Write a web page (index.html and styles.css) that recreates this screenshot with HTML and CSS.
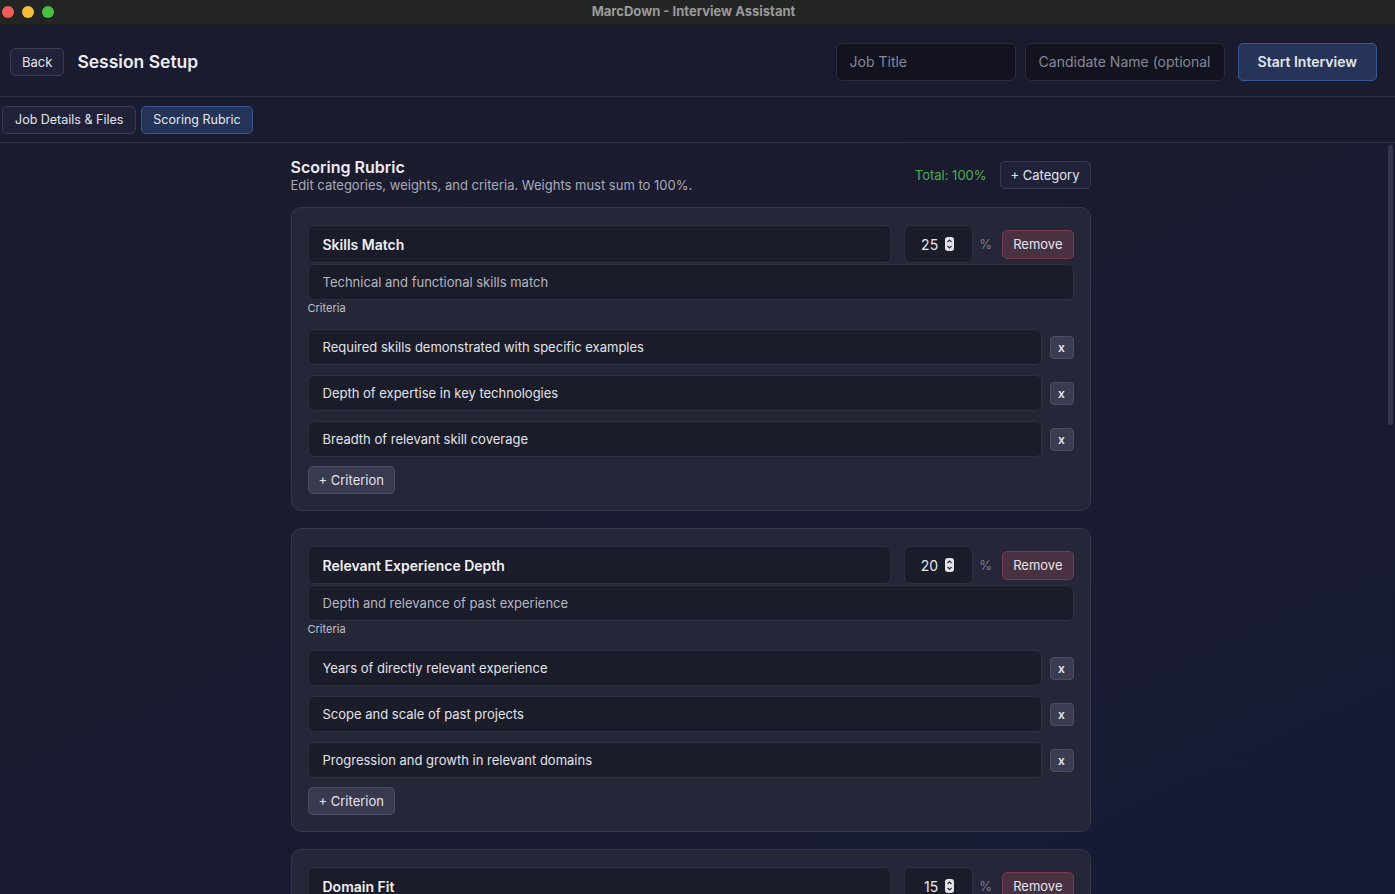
FILE: index.html
```html
<!DOCTYPE html>
<html lang="en">
<head>
    <meta charset="UTF-8">
    <meta name="viewport" content="width=device-width, initial-scale=1.0">
    <title>MarcDown - Interview Assistant</title>
    <link rel="stylesheet" href="styles.css">
</head>
<body>
    <div class="titlebar">
        <div class="lights">
            <span class="light red"></span>
            <span class="light yellow"></span>
            <span class="light green"></span>
        </div>
        <div class="window-title">MarcDown - Interview Assistant</div>
    </div>

    <header class="topbar">
        <div class="topbar-left">
            <button class="btn">Back</button>
            <h1>Session Setup</h1>
        </div>
        <div class="topbar-right">
            <input type="text" class="top-input job" placeholder="Job Title">
            <input type="text" class="top-input candidate" placeholder="Candidate Name (optional)">
            <button class="btn primary">Start Interview</button>
        </div>
    </header>

    <nav class="tabs">
        <button class="btn tab">Job Details &amp; Files</button>
        <button class="btn tab active">Scoring Rubric</button>
    </nav>

    <main class="content">
        <div class="rubric">
            <div class="rubric-head">
                <div>
                    <h2>Scoring Rubric</h2>
                    <p class="sub">Edit categories, weights, and criteria. Weights must sum to 100%.</p>
                </div>
                <div class="rubric-actions">
                    <span class="total">Total: 100%</span>
                    <button class="btn">+ Category</button>
                </div>
            </div>

            <div id="categories"></div>
        </div>
    </main>
    <div class="scroll-thumb"></div>

    <script>
        const categories = [
            { name: 'Skills Match', weight: 25, desc: 'Technical and functional skills match', criteria: [
                'Required skills demonstrated with specific examples',
                'Depth of expertise in key technologies',
                'Breadth of relevant skill coverage'
            ]},
            { name: 'Relevant Experience Depth', weight: 20, desc: 'Depth and relevance of past experience', criteria: [
                'Years of directly relevant experience',
                'Scope and scale of past projects',
                'Progression and growth in relevant domains'
            ]},
            { name: 'Domain Fit', weight: 15, desc: 'Familiarity with the industry and problem space', criteria: [
                'Understanding of the business domain',
                'Awareness of industry trends and constraints',
                'Ability to apply domain knowledge to the role'
            ]},
            { name: 'Problem Solving', weight: 15, desc: 'Approach to ambiguous and complex problems', criteria: [
                'Structured reasoning through unfamiliar problems',
                'Trade-off analysis and decision making',
                'Learning from past mistakes'
            ]},
            { name: 'Communication', weight: 15, desc: 'Clarity and effectiveness of communication', criteria: [
                'Clear and concise explanations',
                'Active listening and follow-up questions',
                'Adapting message to the audience'
            ]},
            { name: 'Culture &amp; Collaboration', weight: 10, desc: 'Teamwork and alignment with team values', criteria: [
                'Examples of effective collaboration',
                'Handling disagreement constructively',
                'Ownership and accountability'
            ]}
        ];

        const stepper = '<svg class="stepper" width="9" height="14" viewBox="0 0 9 14">' +
            '<rect x="0" y="0" width="9" height="14" rx="3" fill="#e4e4e8"/>' +
            '<path d="M2.5 5 L4.5 3 L6.5 5" fill="none" stroke="#2a2a33" stroke-width="1.2"/>' +
            '<path d="M2.5 9 L4.5 11 L6.5 9" fill="none" stroke="#2a2a33" stroke-width="1.2"/>' +
            '</svg>';

        const list = document.getElementById('categories');
        categories.forEach(function(cat) {
            const card = document.createElement('section');
            card.className = 'card';
            let rows = '';
            cat.criteria.forEach(function(c) {
                rows += `
                    <div class="crit-row">
                        <input type="text" class="field crit" value="${c}">
                        <button class="btn small">x</button>
                    </div>`;
            });
            card.innerHTML = `
                <div class="card-top">
                    <input type="text" class="field name" value="${cat.name}">
                    <div class="weight-group">
                        <div class="field weight">
                            <input type="text" value="${cat.weight}">
                            ${stepper}
                        </div>
                        <span class="pct">%</span>
                    </div>
                    <button class="btn danger">Remove</button>
                </div>
                <input type="text" class="field desc" value="${cat.desc}">
                <div class="crit-label">Criteria</div>
                <div class="crit-list">${rows}</div>
                <button class="btn add">+ Criterion</button>
            `;
            list.appendChild(card);
        });
    </script>
</body>
</html>
```

FILE: styles.css
```css
* {
    box-sizing: border-box;
}
html, body {
    height: 100%;
}
body {
    margin: 0;
    font-family: Inter, "Noto Sans", sans-serif;
    color: #e6e7ee;
    background: linear-gradient(155deg, #1c1c2e 0%, #1a1b30 55%, #161a36 100%);
    display: flex;
    flex-direction: column;
    overflow: hidden;
}
button, input {
    font-family: inherit;
}

/* window chrome */
.titlebar {
    height: 25px;
    flex: none;
    background: #232524;
    display: flex;
    align-items: center;
    justify-content: center;
    position: relative;
}
.lights {
    position: absolute;
    left: 2px;
    top: 6px;
    display: flex;
    gap: 8px;
}
.light {
    width: 12px;
    height: 12px;
    border-radius: 50%;
}
.red { background: #ed5f57; }
.yellow { background: #f4bd3a; }
.green { background: #4bc23f; }
.window-title {
    font-size: 13px;
    font-weight: 700;
    color: #999a9a;
    margin-top: -3px;
    margin-left: -8px;
}

/* buttons */
.btn {
    background: #20223a;
    border: 1px solid #393b51;
    color: #e4e5ec;
    border-radius: 5px;
    font-size: 13px;
    height: 28px;
    padding: 0 12px;
    cursor: pointer;
}
.btn.primary {
    background: #253458;
    border-color: #3a5594;
    font-weight: 600;
    font-size: 14px;
    height: 38px;
    padding: 0 19px;
}
.btn.danger {
    background: #4a3141;
    border-color: #7a3b4b;
    height: 29px;
    padding: 0 10px;
}
.btn.small {
    background: #3a3c51;
    border-color: #4b4d63;
    width: 24px;
    height: 23px;
    padding: 0;
    font-size: 12px;
    font-weight: 600;
    border-radius: 4px;
}
.btn.add {
    background: #393a50;
    border-color: #4b4d63;
    padding: 0 10px;
    margin-top: 9px;
}

/* header */
.topbar {
    height: 72px;
    flex: none;
    display: flex;
    align-items: center;
    justify-content: space-between;
    padding: 2px 18px 0 10px;
    background: #1a1b2e;
    border-bottom: 1px solid #2f3145;
}
.topbar-left {
    display: flex;
    align-items: center;
    gap: 13px;
}
.topbar-left .btn {
    padding: 0 11px;
}
h1 {
    margin: 0;
    font-size: 17.5px;
    font-weight: 600;
    color: #ececf2;
}
.topbar-right {
    display: flex;
    align-items: center;
    gap: 9px;
}
.top-input {
    height: 38px;
    background: #12131f;
    border: 1px solid #2a2c3e;
    border-radius: 6px;
    padding: 0 13px;
    font-size: 14px;
    color: #e4e5ec;
}
.top-input::placeholder {
    color: #868898;
}
.top-input.job { width: 180px; }
.top-input.candidate { width: 200px; margin-right: 4px; }

/* tabs */
.tabs {
    height: 46px;
    flex: none;
    display: flex;
    align-items: center;
    gap: 5px;
    padding: 0 2px;
    background: #1a1b2e;
    border-bottom: 1px solid #2f3145;
}
.btn.tab {
    font-size: 12.5px;
    padding: 0 12px;
}
.btn.tab.active {
    background: #243358;
    border-color: #3a5490;
    padding: 0 11px;
}

/* main area */
.content {
    flex: 1;
    overflow-y: auto;
    padding-right: 14px;
}
.content::-webkit-scrollbar {
    width: 0;
}
.scroll-thumb {
    position: fixed;
    right: 2px;
    top: 145px;
    width: 5px;
    height: 280px;
    border-radius: 3px;
    background: #34364c;
}
.rubric {
    width: 800px;
    margin: 0 auto;
    padding: 14px 0 30px;
}
.rubric-head {
    display: flex;
    align-items: center;
    justify-content: space-between;
    margin-bottom: 14px;
}
h2 {
    margin: 0;
    font-size: 16px;
    font-weight: 600;
    line-height: 20px;
    color: #ececf2;
}
.sub {
    margin: 0;
    font-size: 13px;
    line-height: 16px;
    color: #a9abb8;
}
.rubric-actions {
    display: flex;
    align-items: center;
    gap: 13px;
}
.total {
    color: #4caf50;
    font-size: 13px;
}
.rubric-actions .btn {
    padding: 0 10px;
}

/* category cards */
.card {
    background: #252739;
    border: 1px solid #35374c;
    border-radius: 10px;
    padding: 17px 16px 16px;
    margin-bottom: 17px;
    display: flex;
    flex-direction: column;
    align-items: flex-start;
}
.field {
    background: #1b1c29;
    border: 1px solid #2e3042;
    border-radius: 6px;
    color: #e2e3ea;
    font-size: 13px;
    height: 36px;
    padding: 0 14px;
}
.card-top {
    display: flex;
    align-items: center;
    width: 100%;
    gap: 13px;
}
.field.name {
    flex: 1;
    height: 38px;
    font-size: 14px;
    font-weight: 600;
    color: #efeff4;
}
.weight-group {
    display: flex;
    align-items: center;
    gap: 6px;
}
.field.weight {
    width: 69px;
    height: 38px;
    display: flex;
    align-items: center;
    padding: 0 18px 0 0;
    gap: 7px;
}
.field.weight input {
    width: 100%;
    background: transparent;
    border: none;
    color: #e6e7ee;
    font-size: 14px;
    text-align: right;
    padding: 0;
}
.stepper {
    flex: none;
}
.pct {
    color: #7a7c8c;
    font-size: 13px;
    width: 10px;
}
.field.desc {
    width: 100%;
    margin-top: 1px;
    color: #b5b7c2;
}
.crit-label {
    font-size: 11px;
    line-height: 13px;
    color: #c0c2cc;
    margin: 2px 0 14px;
}
.crit-list {
    width: 100%;
    display: flex;
    flex-direction: column;
    gap: 10px;
}
.crit-row {
    display: flex;
    align-items: center;
    gap: 8px;
}
.field.crit {
    flex: 1;
}
```
